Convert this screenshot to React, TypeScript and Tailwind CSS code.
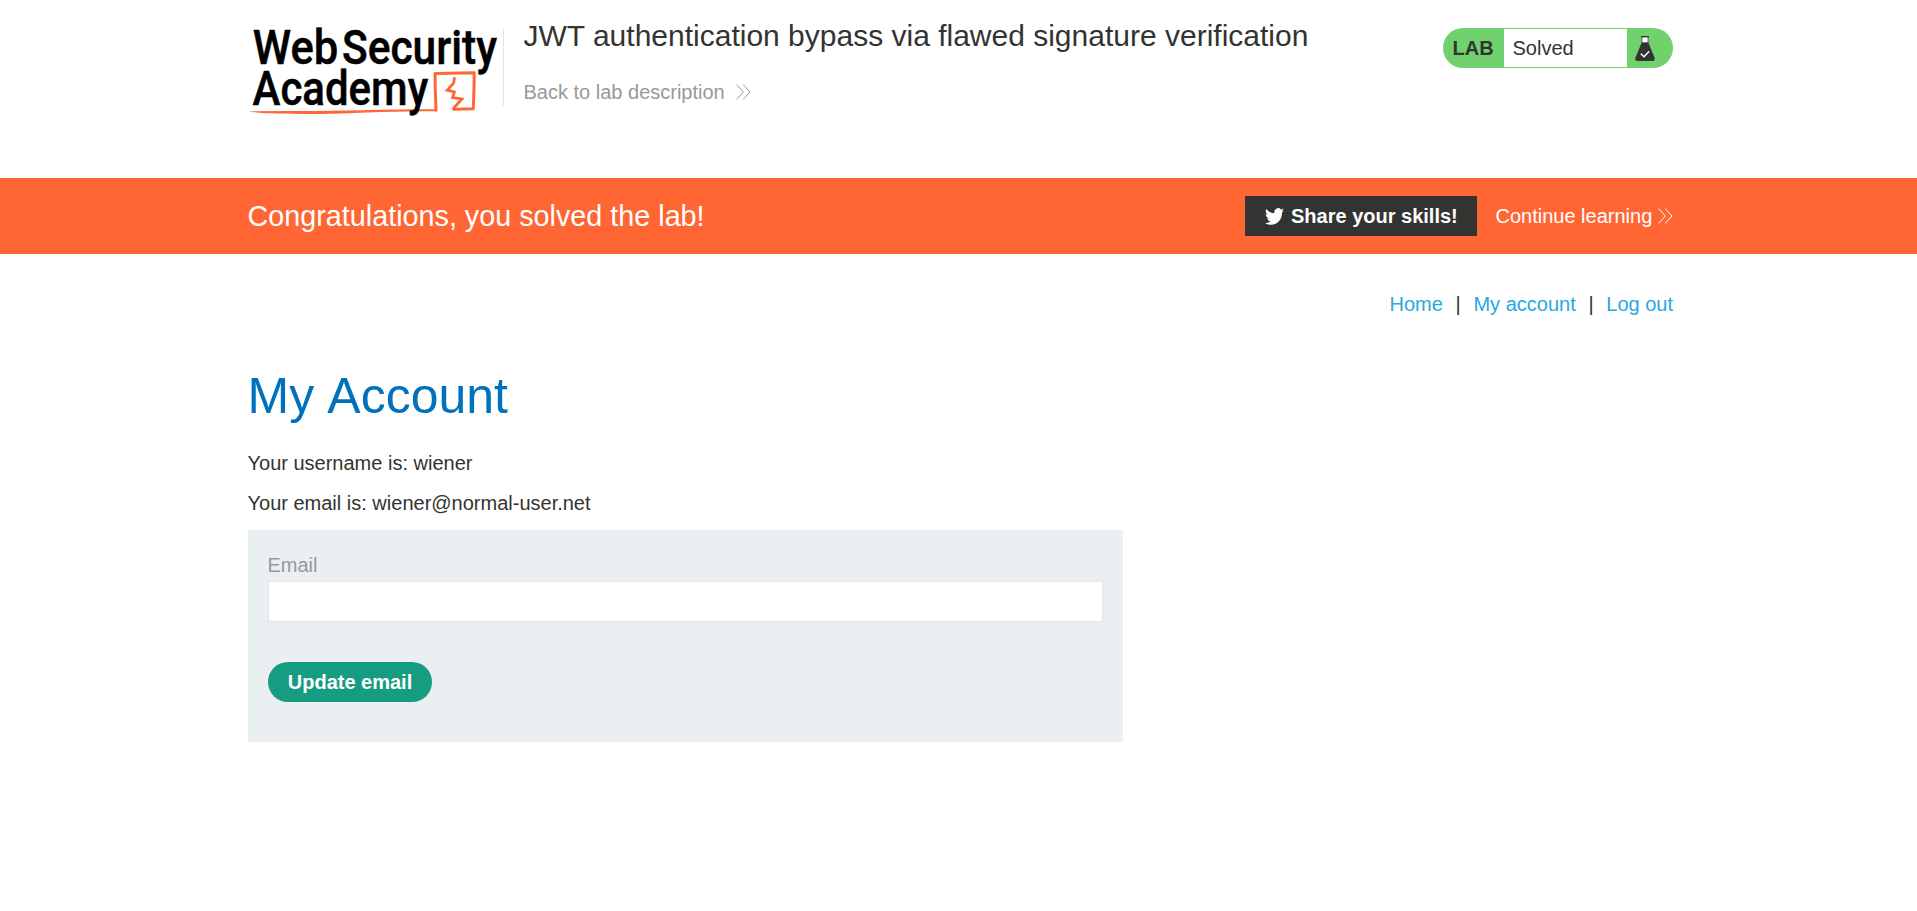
function Logo() {
  return (
    <svg className="h-[110px] w-[250px] shrink-0 overflow-visible" viewBox="8 0 250 110" fill="none">
      <g fill="#000" stroke="#000" strokeWidth="0.5" fontFamily="Roboto, sans-serif" fontWeight="500" fontSize="48">
        <text x="12.8" y="49" textLength="85.5" lengthAdjust="spacingAndGlyphs">Web</text>
        <text x="102" y="49" textLength="155" lengthAdjust="spacingAndGlyphs">Security</text>
      </g>
      <path d="M9 96.4 L48 96 C90 96.4 140 94.2 196 94.2 L196.4 96.2 C160 96.2 120 97.6 90 98.8 C60 99.4 30 98.6 19 97.8 Z" fill="#ff6633" />
      <path d="M196 95.2 C195.6 82 194.8 70 195.2 58.4 L234.2 57.8 C234.2 70 233.8 82 233.3 93.7 L213.5 94.3" stroke="#ff6633" strokeWidth="3" strokeLinejoin="round" strokeLinecap="round" />
      <path d="M214.6 62.3 L213.6 68.2 L207.2 75.2 L214.4 77 L212.6 82.6 L222 83.9 L213.4 93.4" stroke="#ff6633" strokeWidth="2.8" strokeLinejoin="miter" />
      <text x="12.6" y="90" textLength="175.6" lengthAdjust="spacingAndGlyphs" fill="#000" stroke="#000" strokeWidth="0.5" fontFamily="Roboto, sans-serif" fontWeight="500" fontSize="48">Academy</text>
    </svg>
  );
}

function Chevrons({ className }: { className: string }) {
  return (
    <svg className={className} width="15" height="16" viewBox="0 0 15 16" fill="none" stroke="currentColor" strokeWidth="1">
      <path d="M0.6 0.6 L7.4 8 L0.6 15.4 M7.2 0.6 L14 8 L7.2 15.4" />
    </svg>
  );
}

function Flask() {
  return (
    <svg width="20" height="26" viewBox="0 0 20 26">
      <path d="M6 0.6 H14" stroke="#333332" strokeWidth="1.2" />
      <path d="M7 1 H13 V7 H7 Z" fill="#fff" stroke="#333332" strokeWidth="0.7" />
      <path d="M6.7 6.5 H13.3 L19.7 22 Q20.4 25 17.5 25 H2.5 Q-0.4 25 0.3 22 Z" fill="#333332" />
      <path d="M5.8 17.8 L9 20.8 L14.2 15.3" fill="none" stroke="#fff" strokeWidth="1.4" />
    </svg>
  );
}

function Bird() {
  return (
    <svg width="19" height="17" viewBox="0 2 24 20" preserveAspectRatio="none" fill="#fff">
      <path d="M23.95 4.57a10 10 0 01-2.82.77 4.96 4.96 0 002.16-2.72c-.95.55-2 .95-3.13 1.18a4.92 4.92 0 00-8.38 4.48C7.69 8.1 4.07 6.13 1.64 3.16a4.82 4.82 0 00-.67 2.48c0 1.71.87 3.21 2.19 4.1a4.9 4.9 0 01-2.23-.62v.06a4.92 4.92 0 003.95 4.83 5 5 0 01-2.21.08 4.94 4.94 0 004.6 3.42A9.87 9.87 0 010 19.54a14 14 0 007.55 2.21c9.05 0 14-7.5 14-13.98 0-.21 0-.42-.02-.63a9.94 9.94 0 002.46-2.55z" />
    </svg>
  );
}

export default function App() {
  return (
    <div className="h-[911px] w-full overflow-hidden bg-white font-['Liberation_Sans',Arial,sans-serif] text-[20px] leading-[40px] text-[#333332]">
      <header className="flex h-[178px] pt-[15px] pl-[248px]">
        <Logo />
        <div className="mt-[13px] ml-[5px] h-[78px] w-px shrink-0 bg-[#e4e4e4]" />
        <div className="ml-[19.5px] flex w-[919.5px] shrink-0 flex-col pt-px">
          <h2 className="text-[30px] whitespace-nowrap">JWT authentication bypass via flawed signature verification</h2>
          <a className="mt-[16px] flex items-center text-[#999999]">
            Back to lab description
            <Chevrons className="ml-[11px]" />
          </a>
        </div>
        <div className="mt-[13px] flex h-10 w-[230px] shrink-0 items-stretch overflow-hidden rounded-full bg-[#70d16d] py-px">
          <span className="w-[61px] pl-[9.5px] leading-[39px] font-bold">LAB</span>
          <span className="w-[123px] bg-white pl-[8.5px] leading-[38px]">Solved</span>
          <span className="pt-[7px] pl-[8px]">
            <Flask />
          </span>
        </div>
      </header>

      <section className="flex h-[76px] items-center bg-[#ff6633] pl-[247.5px] text-white">
        <h4 className="w-[997.5px] text-[28.75px]">Congratulations, you solved the lab!</h4>
        <a className="flex h-10 w-[232px] items-center bg-[#333332] pl-5 font-bold">
          <Bird />
          <span className="ml-[7px]">Share your skills!</span>
        </a>
        <a className="ml-[18.5px] flex items-center whitespace-nowrap">
          Continue learning
          <Chevrons className="ml-[6px]" />
        </a>
      </section>

      <main className="w-[1673px] pl-[248px]">
        <nav className="flex h-[100px] justify-end gap-[12.7px] pt-[30px] text-[#29a7df]">
          <a>Home</a>
          <span className="text-[#333332]">|</span>
          <a>My account</a>
          <span className="text-[#333332]">|</span>
          <a>Log out</a>
        </nav>
        <h1 className="-ml-[0.5px] h-[89px] pt-[12px] text-[50px] leading-[60px] [word-spacing:2px] text-[#0071bc]">My Account</h1>
        <p className="-ml-[0.5px]">Your username is: wiener</p>
        <p className="-ml-[0.5px]">Your email is: wiener@normal-user.net</p>
        <form className="mt-[7px] h-[212px] w-[875px] bg-[#eaeff2] px-5 pt-[20px]">
          <label className="-ml-[0.5px] block h-[31px] leading-[30px] text-[#999999]">Email</label>
          <input className="block h-[41px] w-full border border-[#e4e4e4] bg-white px-2 outline-none" />
          <button type="button" className="mt-10 block h-10 w-[164px] rounded-full bg-[#169c80] text-center leading-[40px] font-bold text-white">
            Update email
          </button>
        </form>
      </main>
    </div>
  );
}
